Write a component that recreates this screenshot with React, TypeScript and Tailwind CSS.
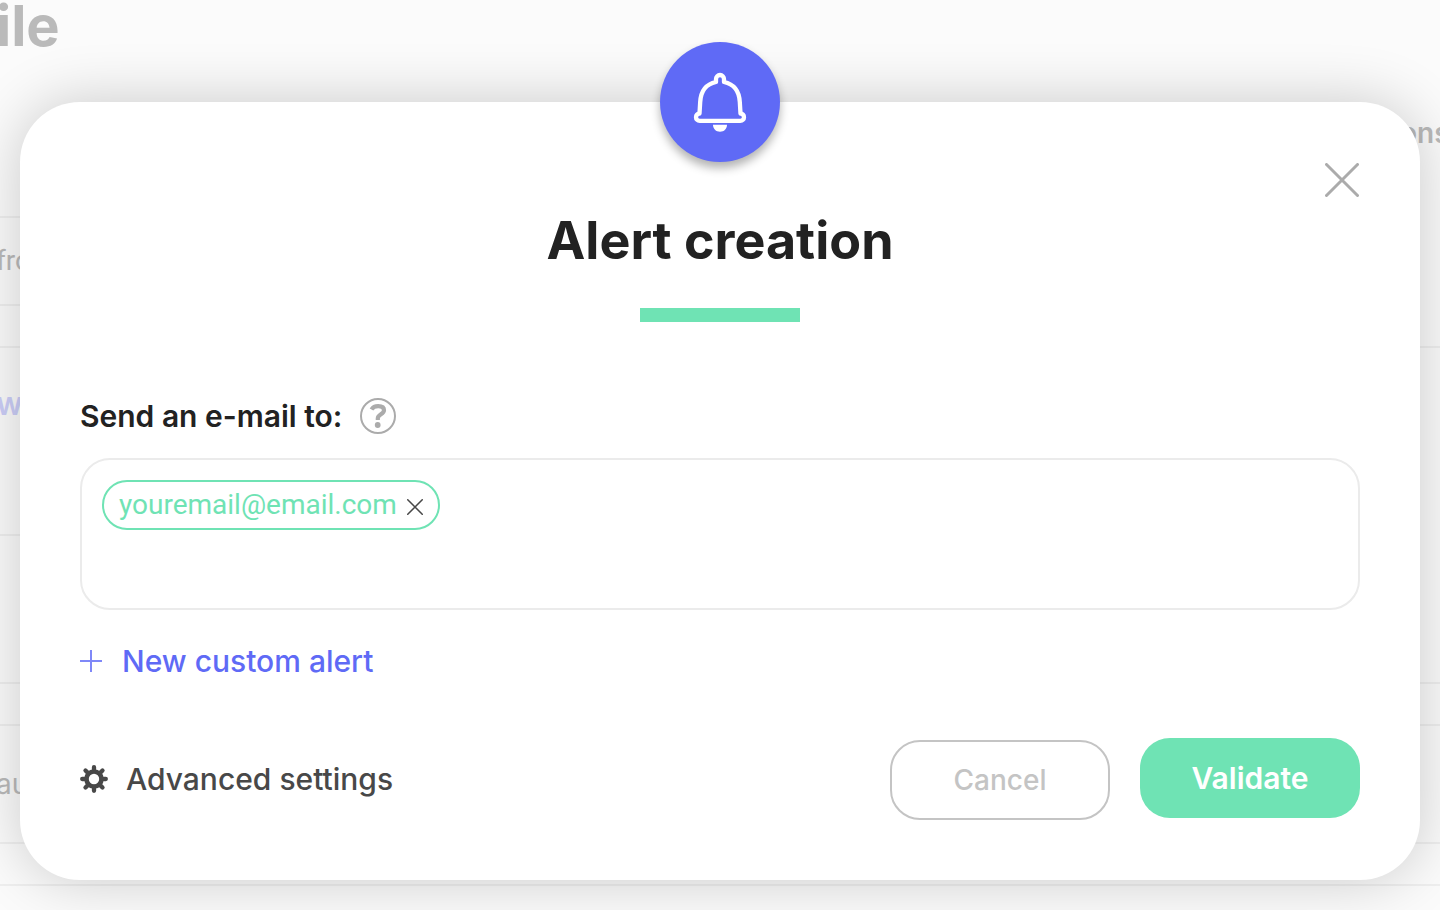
import React, { ReactNode, useState } from 'react';

interface PageRowProps {
  className: string;
  children?: ReactNode;
}

const PageRow = ({ className, children }: PageRowProps) => (
  <div className={`flex shrink-0 border-[#efefef] ${className}`}>{children}</div>
);

const BellIcon = () => (
  <svg width="60" height="68" viewBox="0 0 60 68" fill="none" aria-hidden="true">
    <path
      d="M26 14V11a4 4 0 0 1 8 0v3C43.500 16 49.200 23 49.800 34L50.500 45.500C52.500 45.500 54 47 54 49.200C54 51.300 52.500 52.800 50.300 52.800H9.700C7.500 52.800 6 51.300 6 49.200C6 47 7.500 45.500 9.500 45.500L10.200 34C10.800 23 16.500 16 26 14Z"
      stroke="white"
      strokeWidth="4.300"
      strokeLinejoin="round"
    />
    <path d="M23 56.800H37C37 61 34 63.800 30 63.800S23 61 23 56.800Z" fill="white" />
  </svg>
);

const CrossIcon = ({ size, stroke }: { size: number; stroke: number }) => (
  <svg width={size} height={size} viewBox={`0 0 ${size} ${size}`} aria-hidden="true">
    <path
      d={`M${stroke / 2} ${stroke / 2}L${size - stroke / 2} ${size - stroke / 2}M${size - stroke / 2} ${stroke / 2}L${stroke / 2} ${size - stroke / 2}`}
      stroke="currentColor"
      strokeWidth={stroke}
      strokeLinecap="round"
    />
  </svg>
);

const HelpIcon = () => (
  <svg width="36" height="36" viewBox="0 0 36 36" fill="none" aria-hidden="true">
    <circle cx="18" cy="18" r="17" stroke="#ababab" strokeWidth="2" />
    <path
      d="M11.500 11.500C12.800 9.300 15 8.200 18.200 8.200C21.800 8.200 24 9.800 24 12.300C24 16.300 17.800 16.400 17.800 20.500V22"
      stroke="#ababab"
      strokeWidth="4.200"
    />
    <circle cx="17.700" cy="27" r="2.900" fill="#ababab" />
  </svg>
);

const GearIcon = () => (
  <svg width="28" height="28" viewBox="0 0 28 28" fill="none" aria-hidden="true">
    <circle cx="14" cy="14" r="7.500" stroke="currentColor" strokeWidth="4.600" />
    <path
      d="M14 2.200V6M14 22V25.800M2.200 14H6M22 14H25.800M5.500 5.500L8 8M20 20L22.500 22.500M22.500 5.500L20 8M8 20L5.500 22.500"
      stroke="currentColor"
      strokeWidth="4.300"
      strokeLinecap="round"
    />
  </svg>
);

const PlusIcon = () => (
  <svg width="22" height="22" viewBox="0 0 22 22" aria-hidden="true">
    <path d="M11 0V22M0 11H22" stroke="#5f6af6" strokeOpacity="0.800" strokeWidth="2" />
  </svg>
);

const PageBehind = () => (
  <div className="-ml-1 flex min-h-[910px] overflow-hidden text-[28px] text-[#bababa]" aria-hidden="true">
    <div className="flex-1">
      <PageRow className="h-[218px] border-b-2">
        <span className="text-[56px] leading-[52px] font-bold">ile</span>
      </PageRow>
      <PageRow className="h-[88px] items-center border-b-2">
        <span className="font-['Roboto',sans-serif]">fro</span>
      </PageRow>
      <PageRow className="h-[42px] border-b-2" />
      <PageRow className="h-[188px] border-b-2 pt-8">
        <span className="text-[32px] font-semibold text-[#cccef8]">w</span>
      </PageRow>
      <PageRow className="h-[148px] border-b-2" />
      <PageRow className="h-[42px] border-b-2" />
      <PageRow className="h-[118px] items-center border-b-2">au</PageRow>
      <PageRow className="h-[42px] border-b-2" />
    </div>
    <div className="flex-1">
      <PageRow className="h-[348px] justify-end border-b-2 pt-28">
        <span className="w-10 font-semibold">ons</span>
      </PageRow>
      <PageRow className="h-[336px] border-b-2" />
      <PageRow className="h-[42px] border-b-2" />
      <PageRow className="h-[118px] border-b-2" />
      <PageRow className="h-[42px] border-b-2" />
    </div>
  </div>
);

const AlertDialog = () => {
  const [emails, setEmails] = useState(['youremail@email.com']);
  const [draft, setDraft] = useState('');

  const handleRemove = (email: string) => {
    setEmails(emails.filter((e) => e !== email));
  };

  const handleKeyDown = (e: React.KeyboardEvent) => {
    if (e.key === 'Enter' && draft) {
      setEmails([...emails, draft]);
      setDraft('');
    }
  };

  return (
    <div
      role="dialog"
      aria-labelledby="alert-title"
      className="absolute inset-x-5 top-[102px] rounded-[60px] bg-white px-[60px] pt-[109px] pb-[60px] shadow-[0_0_60px_rgba(0,0,0,0.2)]"
    >
      <div className="absolute -top-[60px] left-1/2 flex size-[120px] -translate-x-1/2 items-center justify-center rounded-full bg-[#5f6af6] shadow-[0_6px_10px_rgba(0,0,0,0.3)]">
        <BellIcon />
      </div>
      <button
        aria-label="Close"
        className="absolute top-[60px] right-[60px] flex size-9 items-center justify-center text-[#ababab]"
      >
        <CrossIcon size={34} stroke={3} />
      </button>

      <h1 id="alert-title" className="text-center text-[52px] leading-[60px] font-bold text-[#222222]">
        Alert creation
      </h1>
      <div className="mx-auto mt-[37px] h-[14px] w-40 bg-[#6fe3b4]" />

      <div className="mt-[74px] flex items-center gap-[18px]">
        <label htmlFor="email" className="text-[30px] leading-10 font-semibold text-[#222222]">
          Send an e-mail to:
        </label>
        <button aria-label="Help">
          <HelpIcon />
        </button>
      </div>
      <div className="mt-[22px] flex min-h-[152px] flex-wrap items-start gap-3 rounded-[30px] border-2 border-[#ebebeb] p-5">
        {emails.map((email) => (
          <span
            key={email}
            className="flex h-[50px] items-center gap-[10px] rounded-full border-2 border-[#6fe3b4] px-[15px] font-['Roboto',sans-serif] text-[28px] text-[#6fe3b4]"
          >
            {email}
            <button
              aria-label={`Remove ${email}`}
              className="pt-1 text-[#484848]"
              onClick={() => handleRemove(email)}
            >
              <CrossIcon size={16} stroke={1.5} />
            </button>
          </span>
        ))}
        <input
          id="email"
          type="email"
          value={draft}
          onChange={(e) => setDraft(e.target.value)}
          onKeyDown={handleKeyDown}
          className="h-[50px] min-w-0 flex-1 text-[28px] outline-none"
        />
      </div>

      <button className="mt-[31px] flex h-10 items-center gap-5 text-[30px] font-medium text-[#5f6af6]">
        <PlusIcon />
        New custom alert
      </button>

      <div className="mt-[57px] flex items-center">
        <button className="flex items-center gap-[18px] text-[30px] font-medium text-[#484848]">
          <GearIcon />
          Advanced settings
        </button>
        <div className="ml-auto flex gap-[30px]">
          <button className="mt-0.5 h-20 w-[220px] rounded-[30px] border-2 border-[#c4c4c4] text-[28px] font-medium text-[#c4c4c4]">
            Cancel
          </button>
          <button className="h-20 w-[220px] rounded-[30px] bg-[#6fe3b4] text-[30px] font-semibold text-white">
            Validate
          </button>
        </div>
      </div>
    </div>
  );
};

const App = () => {
  return (
    <div className="relative min-h-screen overflow-hidden bg-[#fbfbfb] font-['Inter',sans-serif]">
      <PageBehind />
      <AlertDialog />
    </div>
  );
};

export default App;
